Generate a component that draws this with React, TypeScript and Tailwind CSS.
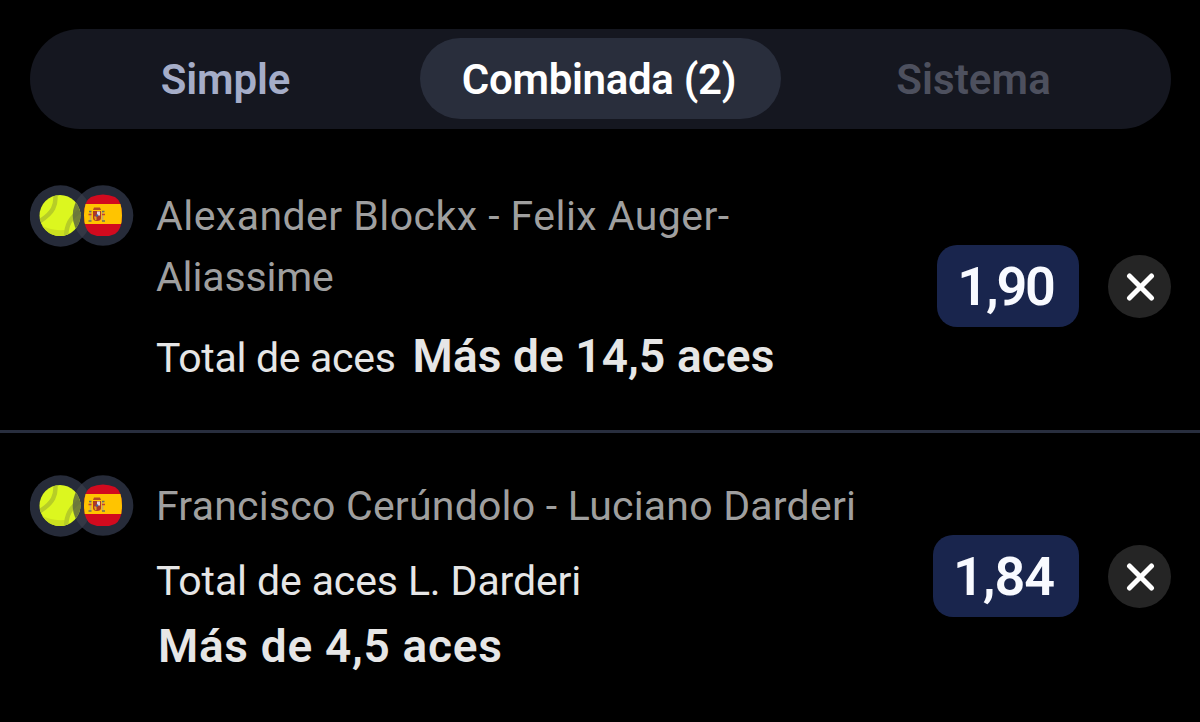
import React from 'react';

interface Bet {
  id: number;
  match: { text: string; tracking: string }[];
  market: string;
  pick: string;
  odds: string;
}

const bets: Bet[] = [
  {
    id: 1,
    match: [
      { text: 'Alexander Blockx - Felix Auger-', tracking: 'tracking-[0.46px]' },
      { text: 'Aliassime', tracking: 'tracking-[-0.15px]' },
    ],
    market: 'Total de aces',
    pick: 'Más de 14,5 aces',
    odds: '1,90',
  },
  {
    id: 2,
    match: [{ text: 'Francisco Cerúndolo - Luciano Darderi', tracking: 'tracking-[0.22px]' }],
    market: 'Total de aces L. Darderi',
    pick: 'Más de 4,5 aces',
    odds: '1,84',
  },
];

const BetIcons: React.FC = () => (
  <svg width="104" height="62" viewBox="0 0 104 62" className="shrink-0">
    <defs>
      <clipPath id="ball">
        <circle cx="30" cy="30.5" r="20.5" />
      </clipPath>
      <clipPath id="flag">
        <path d="M61 12Q73 7 85 12Q92 16 92 30.500T85 49Q73 54 61 49Q54 45 54 30.500T61 12Z" />
      </clipPath>
      <clipPath id="overlap">
        <circle cx="73" cy="30.5" r="30.3" />
      </clipPath>
    </defs>
    <circle cx="30.5" cy="31" r="30.7" fill="#262b39" />
    <circle cx="73" cy="30.5" r="30.3" fill="#262b39" />
    <g clipPath="url(#overlap)">
      <circle cx="30.5" cy="31" r="30.7" fill="#343845" />
    </g>
    {/* Tennis ball */}
    <g clipPath="url(#ball)">
      <rect x="9" y="9" width="42" height="43" fill="#dcf71f" />
      <path d="M11 40Q20 46 35 45L34 54H22Z" fill="#cce11f" />
      <path d="M25 8C27 20 23 28 10 36" fill="none" stroke="#b7cd27" strokeWidth="4.500" />
      <path d="M36 54C36 40 40 32 52 25" fill="none" stroke="#b7cd27" strokeWidth="4.500" />
      <circle cx="73" cy="30.5" r="30.3" fill="#5e6840" fillOpacity="0.85" />
    </g>
    {/* Spanish flag */}
    <g clipPath="url(#flag)">
      <rect x="54" y="9" width="39" height="42" fill="#d20a1e" />
      <rect x="54" y="19" width="39" height="20" fill="#ffc400" />
      <path d="M60.500 26v10M72.500 26v10" stroke="#c9a96a" strokeWidth="1.600" />
      <path d="M58.500 29.500h3M72 29.500h3" stroke="#c8412a" strokeWidth="1.500" />
      <path d="M59 26.500h2.500M72 26.500h2.500M58.500 36h3M72 36h3" stroke="#69705c" strokeWidth="1.500" />
      <path d="M63 26h8v7q0 3-4 3t-4-3z" fill="#ad3a26" />
      <path d="M67 26.500h3v4h-3z" fill="#e5ddd9" />
      <path d="M64 31.500h2.500v3.500h-1.500z" fill="#e4a51c" />
      <path d="M63 25l1-2.500h6l1 2.500z" fill="#b54a21" />
      <circle cx="67" cy="30.500" r="1.200" fill="#4d5b9b" />
    </g>
  </svg>
);

const BetRow: React.FC<{ bet: Bet; inline?: boolean }> = ({ bet, inline }) => (
  <div className={`flex items-center pl-[30px] pr-[29px] ${inline ? 'h-[288px]' : 'h-[286px]'}`}>
    <div className={`flex flex-1 items-start self-stretch ${inline ? 'pt-[43px]' : 'pt-[42px]'}`}>
      <BetIcons />
      <div className="ml-[22px] mt-px whitespace-nowrap">
        <p className="text-[41px] leading-[61px] text-[#9f9f9f]">
          {bet.match.map((line) => (
            <span key={line.text} className={`block ${line.tracking}`}>{line.text}</span>
          ))}
        </p>
        <div className={inline ? 'mt-[18px] flex items-baseline gap-[17px]' : 'mt-[14px]'}>
          <p className={`text-[41px] leading-[61px] text-[#e6e6e6] ${inline ? 'tracking-[-0.3px]' : 'tracking-[-0.12px]'}`}>
            {bet.market}
          </p>
          <p className={`text-[46px] leading-[61px] font-semibold text-[#e6e6e6] ${inline ? 'tracking-[0.1px]' : 'mt-[4px] pl-[2px] tracking-[0.7px]'}`}>
            {bet.pick}
          </p>
        </div>
      </div>
    </div>
    <span
      className={`flex h-[82px] items-center justify-center rounded-[20px] bg-[#19254d] text-[54px] font-semibold text-[#f8faff] ${
        inline ? 'w-[142px] pr-[5px] tracking-[-2.2px]' : 'w-[146px] pr-[5px] tracking-[-1px]'
      }`}
    >
      {bet.odds}
    </span>
    <button aria-label="Eliminar" className="ml-[29px] flex size-[63px] items-center justify-center rounded-full bg-[#252525]">
      <svg width="30" height="30" viewBox="0 0 30 30" fill="none" stroke="#fff" strokeWidth="5" strokeLinecap="round">
        <path d="M4.500 5l22 22M26.500 5L4.500 27" />
      </svg>
    </button>
  </div>
);

export default function App() {
  return (
    <div className="h-[722px] w-[1200px] overflow-hidden bg-black pt-[29px] font-['Roboto',sans-serif]">
      {/* Tabs */}
      <div className="ml-[30px] mr-[29px] flex h-[100px] items-center justify-between rounded-full bg-[#151720] px-[10px] pb-px text-[42px] font-semibold">
        <button className="h-[81px] w-[371px] pt-px tracking-[-0.1px] text-[#a5adc8]">Simple</button>
        <button className="h-[81px] w-[361px] rounded-full bg-[#292e3c] pr-[3px] pt-px tracking-[-0.3px] text-white">Combinada (2)</button>
        <button className="h-[81px] w-[371px] pr-[4px] pt-px tracking-[0.1px] text-[#4d505e]">Sistema</button>
      </div>

      <div className="mt-[13px]">
        <BetRow bet={bets[0]} inline />
        <div className="h-[3px] bg-[#282e3e]" />
        <BetRow bet={bets[1]} />
      </div>
    </div>
  );
}
